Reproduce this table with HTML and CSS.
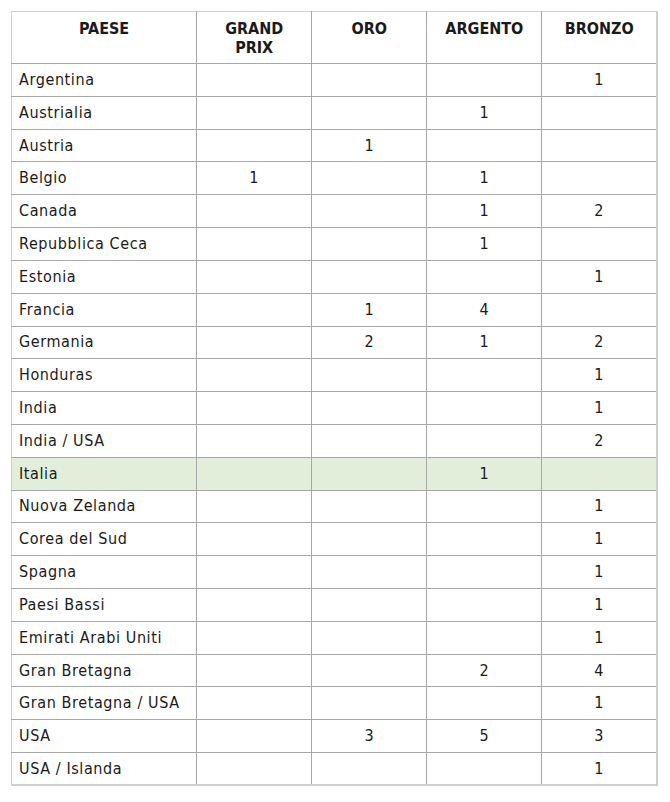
FILE: index.html
```html
<!DOCTYPE html>
<html lang="it">
<head>
<meta charset="utf-8">
<title>Medagliere</title>
<link rel="stylesheet" href="styles.css">
</head>
<body>
<table class="medals">
  <colgroup>
    <col class="c-country"><col class="c-num"><col class="c-num"><col class="c-num"><col class="c-num">
  </colgroup>
  <thead>
    <tr><th>PAESE</th><th>GRAND<br>PRIX</th><th>ORO</th><th>ARGENTO</th><th>BRONZO</th></tr>
  </thead>
  <tbody>
    <tr><td>Argentina</td><td></td><td></td><td></td><td>1</td></tr>
    <tr><td>Austrialia</td><td></td><td></td><td>1</td><td></td></tr>
    <tr><td>Austria</td><td></td><td>1</td><td></td><td></td></tr>
    <tr><td>Belgio</td><td>1</td><td></td><td>1</td><td></td></tr>
    <tr><td>Canada</td><td></td><td></td><td>1</td><td>2</td></tr>
    <tr><td>Repubblica Ceca</td><td></td><td></td><td>1</td><td></td></tr>
    <tr><td>Estonia</td><td></td><td></td><td></td><td>1</td></tr>
    <tr><td>Francia</td><td></td><td>1</td><td>4</td><td></td></tr>
    <tr><td>Germania</td><td></td><td>2</td><td>1</td><td>2</td></tr>
    <tr><td>Honduras</td><td></td><td></td><td></td><td>1</td></tr>
    <tr><td>India</td><td></td><td></td><td></td><td>1</td></tr>
    <tr><td>India / USA</td><td></td><td></td><td></td><td>2</td></tr>
    <tr class="hl"><td>Italia</td><td></td><td></td><td>1</td><td></td></tr>
    <tr><td>Nuova Zelanda</td><td></td><td></td><td></td><td>1</td></tr>
    <tr><td>Corea del Sud</td><td></td><td></td><td></td><td>1</td></tr>
    <tr><td>Spagna</td><td></td><td></td><td></td><td>1</td></tr>
    <tr><td>Paesi Bassi</td><td></td><td></td><td></td><td>1</td></tr>
    <tr><td>Emirati Arabi Uniti</td><td></td><td></td><td></td><td>1</td></tr>
    <tr><td>Gran Bretagna</td><td></td><td></td><td>2</td><td>4</td></tr>
    <tr><td>Gran Bretagna / USA</td><td></td><td></td><td></td><td>1</td></tr>
    <tr><td>USA</td><td></td><td>3</td><td>5</td><td>3</td></tr>
    <tr><td>USA / Islanda</td><td></td><td></td><td></td><td>1</td></tr>
  </tbody>
</table>
</body>
</html>
```

FILE: styles.css
```css
html, body {
  margin: 0;
  padding: 0;
  background: #ffffff;
}
body {
  padding: 11px 0 0 11px;
  font-family: "DejaVu Sans Condensed", "DejaVu Sans", sans-serif;
  font-stretch: condensed;
  font-size: 16px;
  color: #1a1a1a;
}
.medals {
  border-collapse: collapse;
  table-layout: fixed;
  width: 647px;
  border-top: 1px solid #cfcfcf;
  border-left: 1px solid #cfcfcf;
  border-right: 2px solid #cfcfcf;
  border-bottom: 2px solid #cfcfcf;
}
.c-country { width: 185px; }
.c-num { width: 115px; }
.medals th,
.medals td {
  border: 1px solid #a8a8a8;
  padding: 0 7px;
}
.medals tr:first-child th { border-top-color: #cfcfcf; }
.medals th:first-child, .medals td:first-child { border-left-color: #cfcfcf; }
.medals th:last-child, .medals td:last-child { border-right-color: #cfcfcf; }
.medals tbody tr:last-child td { border-bottom-color: #cfcfcf; }
.medals th {
  height: 52px;
  vertical-align: top;
  padding-top: 7px;
  box-sizing: border-box;
  font-weight: bold;
  line-height: 19px;
  text-align: center;
}
.medals td {
  height: 32.82px;
  box-sizing: border-box;
  text-align: center;
  line-height: 18px;
  letter-spacing: 0.6px;
}
.medals td:first-child {
  text-align: left;
}
.medals tr.hl td {
  background: #e2eed9;
}
```
